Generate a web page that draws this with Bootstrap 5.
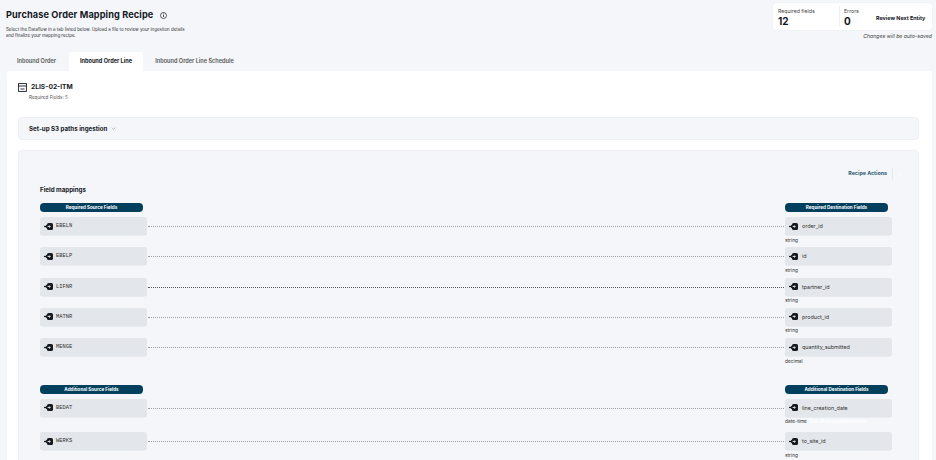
<!DOCTYPE html>
<html lang="en">
<head>
  <meta charset="UTF-8" />
  <title>Purchase Order Mapping Recipe</title>
  <link href="https://cdn.jsdelivr.net/npm/bootstrap@5.3.3/dist/css/bootstrap.min.css" rel="stylesheet">
  <style>
    html, body { height: 100%; }
    body { background: #f4f6fa; color: #16191f; font-family: Inter, "Noto Sans", sans-serif; overflow: hidden; font-size: 6px; }
    .page-head { padding: 3px 4px 0 6px; height: 52px; }
    .page-title { font-size: 9.2px; font-weight: 700; margin: 5.5px 0 6px; line-height: 12px; letter-spacing: .1px; }
    .page-title svg { margin-left: 4px; vertical-align: -1px; }
    .page-sub { font-size: 4.45px; line-height: 6.5px; color: #333; margin: 0; }
    .sum-box { width: 159px; height: 27px; background: #fff; border-radius: 3px; padding: 6px 5px 0; box-shadow: 0 0 1px rgba(0,0,0,.12); }
    .sum-cell { width: 61px; line-height: 1; }
    .sum-cell + .sum-cell { border-left: 1px solid #eef0f3; padding-left: 4px; width: 37px; height: 21px; margin-top: -3px; padding-top: 3px; }
    .sum-label { font-size: 5.2px; color: #444; }
    .sum-num { font-size: 10px; font-weight: 700; margin-top: 2px; }
    .sum-link { font-size: 5.4px; font-weight: 700; margin-top: 5px; white-space: nowrap; }
    .autosave { font-size: 5.2px; font-style: italic; text-align: right; color: #444; margin-top: 3px; }
    .tab-row { height: 19px; margin-left: 7px; }
    .tab-item { font-size: 5.6px; font-weight: 600; color: #555; display: flex; align-items: center; justify-content: center; height: 19px; }
    .tab-first { width: 62px; padding-right: 3px; }
    .tab-active { width: 74px; background: #fff; color: #16191f; font-weight: 700; border-radius: 3px 3px 0 0; }
    .tab-last { width: 103px; }
    .panel { background: #fff; margin: 0 4px 0 7px; padding: 12px 13px 0 11px; height: 389px; border-radius: 3px 3px 0 0; }
    .entity-name { font-size: 6.7px; font-weight: 700; line-height: 9px; }
    .entity-sub { font-size: 4.6px; color: #555; padding-left: 11px; margin-top: 3px; line-height: 6px; }
    .s3-box { background: #f4f6fa; border: 1px solid #eef0f4; border-radius: 4px; height: 23px; margin-top: 16px; padding-left: 10px; font-size: 6.2px; font-weight: 700; }
    .map-box { background: #f4f6fa; border: 1px solid #eef0f4; border-radius: 4px; margin-top: 10px; height: 320px; padding: 17px 26px 0 21px; }
    .actions { font-size: 5.3px; font-weight: 700; color: #2f5d75; height: 12px; margin-right: -10px; }
    .actions-sep { width: 1px; height: 12px; background: #e6e9ee; margin: 0 4px 0 5px; }
    .map-title { font-size: 6.2px; font-weight: 700; margin: 6px 0 9px; line-height: 8px; }
    .pill-dark { width: 103px; height: 9px; line-height: 9px; background: #00405c; color: #fff; border-radius: 4px; text-align: center; font-size: 4.6px; font-weight: 700; }
    .pill-line { margin-bottom: 5px; }
    .pill-end { margin-right: 4px; }
    .map-row { height: 30.3px; }
    .map-row.tall { height: 33.5px; }
    .field-box { width: 107px; height: 18px; background: #e3e6ea; border-radius: 3px; padding-left: 4px; font-size: 5.4px; color: #333; gap: 3px; flex-shrink: 0; box-shadow: 0 .5px 0 #dcdfe4; }
    .dest-box { gap: 4px; }
    .field-box.mono-field { font-family: "Liberation Mono", monospace; font-size: 5.4px; }
    .dots { flex-grow: 1; border-top: 1px dotted #9a9da2; margin: 9px 1px 0 1px; height: 0; }
    .dots.dark { border-top-color: #555; }
    .field-type { font-size: 4.8px; color: #333; line-height: 6px; margin-top: 1.5px; white-space: nowrap; }
    .faint-link { color: #fff; font-weight: 700; margin-left: 2px; }
    .group-gap { height: 16.5px; }
  </style>
</head>
<body>

  <svg width="0" height="0" class="position-absolute">
    <symbol id="ico-in" viewBox="0 0 9 7">
      <rect x="3" y="0" width="6" height="7" rx="1.6" fill="#16191f"/>
      <path d="M0 3.5H5.6" stroke="#16191f" stroke-width="1.2"/>
      <path d="M3.2 1.6 1.5 3.5 3.2 5.4" fill="none" stroke="#16191f" stroke-width="1"/>
      <path d="M3.6 3.5H6.2M5.2 2.4 6.3 3.5 5.2 4.6" fill="none" stroke="#fff" stroke-width=".8"/>
    </symbol>
  </svg>

  <div class="page-head d-flex justify-content-between">
    <div>
      <h1 class="page-title">Purchase Order Mapping Recipe
        <svg width="7" height="7" viewBox="0 0 7 7"><circle cx="3.5" cy="3.5" r="3" fill="none" stroke="#16191f" stroke-width=".7"/><path d="M3.5 3v2M3.5 1.6v.8" stroke="#16191f" stroke-width=".8"/></svg>
      </h1>
      <p class="page-sub">Select the Dataflow in a tab listed below. Upload a file to review your ingestion details<br>and finalize your mapping recipe.</p>
    </div>
    <div>
      <div class="sum-box d-flex">
        <div class="sum-cell"><div class="sum-label">Required fields</div><div class="sum-num">12</div></div>
        <div class="sum-cell"><div class="sum-label">Errors</div><div class="sum-num">0</div></div>
        <div class="sum-link">Review Next Entity</div>
      </div>
      <div class="autosave">Changes will be auto-saved</div>
    </div>
  </div>

  <div class="tab-row d-flex">
    <div class="tab-item tab-first">Inbound Order</div>
    <div class="tab-item tab-active">Inbound Order Line</div>
    <div class="tab-item tab-last">Inbound Order Line Schedule</div>
  </div>

  <div class="panel">
    <div class="entity-name d-flex align-items-center gap-1">
      <svg width="9" height="9" viewBox="0 0 9 9"><rect x=".6" y=".6" width="7.8" height="7.8" fill="none" stroke="#16191f" stroke-width=".9"/><path d="M.6 3h7.8M2.5 6h4" stroke="#16191f" stroke-width=".9" fill="none"/></svg>
      2LIS-02-ITM
    </div>
    <div class="entity-sub">Required Fields: 5</div>

    <div class="s3-box d-flex align-items-center">Set-up S3 paths ingestion
      <svg width="5" height="3" viewBox="0 0 6 4" class="ms-1"><path d="M.5 .8 3 3.2 5.5 .8" fill="none" stroke="#888" stroke-width=".7"/></svg>
    </div>

    <div class="map-box">
      <div class="actions d-flex justify-content-end align-items-center">Recipe Actions<span class="actions-sep"></span><svg width="5" height="3" viewBox="0 0 5 3"><path d="M.5 .5 2.5 2.5 4.5 .5" fill="none" stroke="#fff" stroke-width=".8"/></svg></div>
      <div class="map-title">Field mappings</div>

      <div class="pill-line d-flex justify-content-between">
        <div class="pill-dark">Required Source Fields</div>
        <div class="pill-dark pill-end">Required Destination Fields</div>
      </div>
      <div id="required-rows"></div>

      <div class="group-gap"></div>
      <div class="pill-line d-flex justify-content-between">
        <div class="pill-dark">Additional Source Fields</div>
        <div class="pill-dark pill-end">Additional Destination Fields</div>
      </div>
      <div id="additional-rows"></div>
    </div>
  </div>

  <script>
    const requiredRows = [
      ["EBELN", "order_id", "string"],
      ["EBELP", "id", "string"],
      ["LIFNR", "tpartner_id", "string", true],
      ["MATNR", "product_id", "string"],
      ["MENGE", "quantity_submitted", "decimal"]
    ];
    const additionalRows = [
      ["BEDAT", "line_creation_date", "date-time"],
      ["WERKS", "to_site_id", "string"]
    ];

    function rowHtml(r) {
      const ico = '<svg width="9" height="7"><use href="#ico-in"/></svg>';
      const isDate = r[2] === "date-time";
      const extra = isDate ? '<span class="faint-link">See all accepted formats</span>' : "";
      return '<div class="map-row d-flex' + (isDate ? ' tall' : '') + '">' +
        '<div class="field-box mono-field d-flex align-items-center">' + ico + r[0] + '</div>' +
        '<div class="dots' + (r[3] ? ' dark' : '') + '"></div>' +
        '<div><div class="field-box dest-box d-flex align-items-center">' + ico + r[1] + '</div>' +
        '<div class="field-type">' + r[2] + extra + '</div></div>' +
        '</div>';
    }
    document.getElementById("required-rows").innerHTML = requiredRows.map(rowHtml).join("");
    document.getElementById("additional-rows").innerHTML = additionalRows.map(rowHtml).join("");
  </script>
  <script src="https://cdn.jsdelivr.net/npm/bootstrap@5.3.3/dist/js/bootstrap.bundle.min.js"></script>
</body>
</html>
